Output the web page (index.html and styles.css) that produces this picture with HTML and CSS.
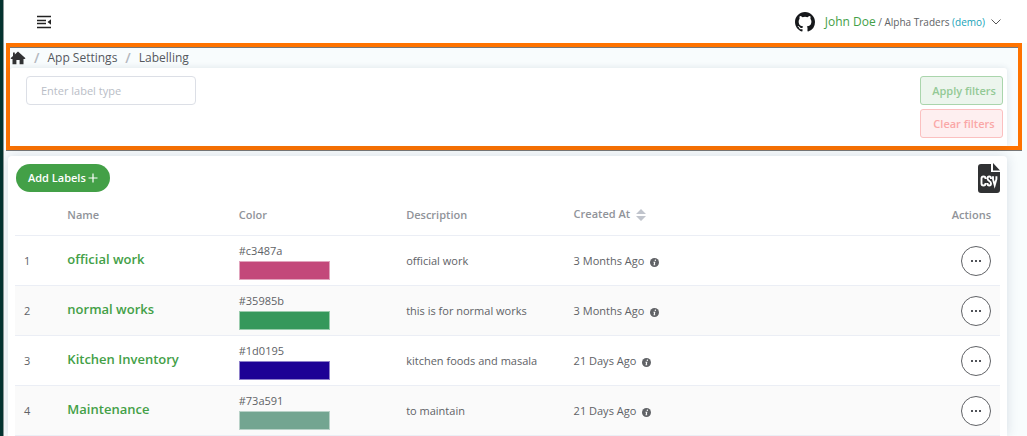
FILE: index.html
```html
<!DOCTYPE html>
<html lang="en">
<head>
<meta charset="utf-8">
<title>Labelling</title>
<link rel="stylesheet" href="styles.css">
</head>
<body>
<svg class="defs" aria-hidden="true">
  <symbol id="info" viewBox="0 0 16 16"><circle cx="8" cy="8" r="8" fill="currentColor"/><path d="M9.6 2.8a1.3 1.3 0 1 1-.1 2.6 1.3 1.3 0 0 1 .1-2.6zM6 6.6h3.6L8.5 11.400h1l-.3 1.400H6.200L7.300 8H5.700z" fill="#fff"/></symbol>
  <symbol id="dots" viewBox="0 0 12 4"><path d="M1 1h2v2H1zM5 1h2v2H5zM9 1h2v2H9z" fill="currentColor"/></symbol>
</svg>
<div class="app">
  <div class="sidebar"></div>
  <div class="page">
    <header class="topbar">
      <button class="icon-btn" aria-label="Toggle menu">
        <svg width="16" height="14" viewBox="0 0 16 14"><path d="M1 1.500h14M1 5.500h9M1 8.500h9M1 12.500h14" stroke="#222" stroke-width="1.400" fill="none"/><path d="M15 4.200v5.600L11.500 7z" fill="#222"/></svg>
      </button>
      <div class="account">
        <a href="#" class="github" aria-label="GitHub"><svg width="20" height="20" viewBox="0 0 16 16"><path fill="#16181b" fill-rule="evenodd" d="M8 0C3.580 0 0 3.580 0 8c0 3.540 2.290 6.530 5.470 7.590.4.070.55-.17.55-.38 0-.19-.01-.82-.01-1.490-2.010.37-2.530-.49-2.690-.94-.09-.23-.48-.94-.82-1.130-.28-.15-.68-.52-.01-.53.63-.01 1.080.58 1.230.82.72 1.210 1.870.87 2.330.66.070-.52.28-.87.51-1.070-1.780-.2-3.640-.89-3.640-3.950 0-.87.31-1.590.82-2.150-.08-.2-.36-1.020.08-2.120 0 0 .67-.21 2.200.82a7.600 7.600 0 0 1 4 0c1.530-1.040 2.200-.82 2.200-.82.44 1.100.16 1.920.08 2.120.51.56.82 1.270.82 2.150 0 3.070-1.870 3.750-3.650 3.950.29.25.54.73.54 1.480 0 1.070-.01 1.930-.01 2.200 0 .21.15.46.55.38A8.010 8.010 0 0 0 16 8c0-4.420-3.580-8-8-8z"/></svg></a>
        <div class="who"><span class="user">John Doe</span> / Alpha Traders <span class="demo">(demo)</span></div>
        <svg class="chevron" width="10" height="6" viewBox="0 0 10 6"><path d="M.5.5 5 5 9.500.5" fill="none" stroke="#555" stroke-width="1"/></svg>
      </div>
    </header>
    <main>
      <section class="highlight">
        <nav class="crumbs" aria-label="Breadcrumb">
          <a href="#" aria-label="Home"><svg width="16" height="14" viewBox="0 0 16 14"><path d="M8 .5 15.500 7.300 14.600 8H13.500v5.300H9.600V9H6.400v4.300H2.500V8H1.400L.5 7.300 3 5V1.500h1.800v1.900z" fill="#303133"/></svg></a>
          <span class="slash">/</span><a href="#">App Settings</a><span class="slash">/</span><span>Labelling</span>
        </nav>
        <form class="filters">
          <input class="label-type" type="text" placeholder="Enter label type" aria-label="Label type">
          <div class="filter-actions">
            <button type="button" class="btn apply">Apply filters</button>
            <button type="button" class="btn clear">Clear filters</button>
          </div>
        </form>
      </section>
      <section class="card">
        <div class="tools">
          <button class="add">Add Labels <svg width="10" height="10" viewBox="0 0 10 10"><path d="M5 .5v9M.5 5h9" stroke="#fff" stroke-width="1.200"/></svg></button>
          <button class="icon-btn" aria-label="Export CSV">
            <svg width="22" height="30" viewBox="0 0 22 30"><path d="M3 1h10v8h9v18a3 3 0 0 1-3 3H3a3 3 0 0 1-3-3V4a3 3 0 0 1 3-3zM15 0l7 7.500h-7z" fill="#303133"/><path d="M7.500 16v-.5a2 2 0 0 0-4 0v5a2 2 0 0 0 4 0V20M13 16v-.5c0-2.600-3.500-2.600-3.500 0 0 2.800 3.500 2.200 3.500 5 0 2.600-3.500 2.600-3.500 0V20M15 13.200v3l1.700 6 1.700-6v-3" fill="none" stroke="#fff" stroke-width="1.900"/></svg>
          </button>
        </div>
        <table class="labels">
          <colgroup><col class="c-num"><col class="c-name"><col class="c-col"><col class="c-col"><col class="c-date"><col></colgroup>
          <thead><tr><th></th><th>Name</th><th>Color</th><th>Description</th><th class="sortable">Created At <svg class="sort" width="10" height="12" viewBox="0 0 10 12"><path d="M5 0l5 5H0zM5 12l5-5H0z" fill="#c0c4cc"/></svg></th><th class="act">Actions</th></tr></thead>
          <tbody>
            <tr><td class="num">1</td><td class="name"><a href="#">official work</a></td><td>#c3487a<div class="swatch" style="background-color:#c3487a"></div></td><td>official work</td><td>3 Months Ago <svg class="info" width="9" height="9"><use href="#info"/></svg></td><td class="act"><button class="more" aria-label="More actions"><svg width="12" height="4"><use href="#dots"/></svg></button></td></tr>
            <tr><td class="num">2</td><td class="name"><a href="#">normal works</a></td><td>#35985b<div class="swatch" style="background-color:#35985b"></div></td><td>this is for normal works</td><td>3 Months Ago <svg class="info" width="9" height="9"><use href="#info"/></svg></td><td class="act"><button class="more" aria-label="More actions"><svg width="12" height="4"><use href="#dots"/></svg></button></td></tr>
            <tr><td class="num">3</td><td class="name"><a href="#">Kitchen Inventory</a></td><td>#1d0195<div class="swatch" style="background-color:#1d0195"></div></td><td>kitchen foods and masala</td><td>21 Days Ago <svg class="info" width="9" height="9"><use href="#info"/></svg></td><td class="act"><button class="more" aria-label="More actions"><svg width="12" height="4"><use href="#dots"/></svg></button></td></tr>
            <tr><td class="num">4</td><td class="name"><a href="#">Maintenance</a></td><td>#73a591<div class="swatch" style="background-color:#73a591"></div></td><td>to maintain</td><td>21 Days Ago <svg class="info" width="9" height="9"><use href="#info"/></svg></td><td class="act"><button class="more" aria-label="More actions"><svg width="12" height="4"><use href="#dots"/></svg></button></td></tr>
          </tbody>
        </table>
      </section>
    </main>
  </div>
</div>
</body>
</html>
```
FILE: styles.css
```css
* { box-sizing: border-box; }
body { margin: 0; overflow: hidden; color: #606266; font: 11px/16px "Open Sans", "Noto Sans", sans-serif; }
a { color: inherit; text-decoration: none; }
button, input { font: inherit; }
svg { display: block; }
.defs { display: none; }

.app { display: flex; min-height: 100vh; }
.sidebar { flex: none; width: 4px; background: #04332f; border-right: 1px solid #8b9896; }
.page { flex: 1; min-width: 0; background: #f8fcfd; }

.topbar { display: flex; align-items: center; justify-content: space-between; height: 43px; padding: 0 26px 0 32px; background: #fff; }
.icon-btn { padding: 0; border: 0; background: none; cursor: pointer; }
.account { display: flex; align-items: center; gap: 10px; }
.who { font-size: 10px; line-height: 18px; }
.user { color: #43a047; font-size: 12px; }
.demo { color: #17a2b8; }
.chevron { margin-left: -4px; }

.highlight { margin: 0 5px 0 2px; border: 4px solid #ff7300; box-shadow: 0 1px 0 #777; }
.crumbs { display: flex; align-items: center; height: 21px; box-shadow: inset 0 1px 0 #777; color: #55585e; font-size: 12px; }
.slash { margin: 0 8px; color: #b4b8bf; font-size: 14px; font-weight: 600; }
.filters { display: flex; justify-content: space-between; align-items: flex-start; min-height: 78px; margin-right: 11px; padding: 8px 4px 4px 16px; background: #fff; border-radius: 3px 3px 0 0; box-shadow: 0 0 6px rgba(30, 60, 90, .12); }
.label-type { width: 170px; height: 29px; padding: 0 14px; border: 1px solid #dcdfe6; border-radius: 4px; outline: 0; color: #606266; }
.label-type::placeholder { color: #b9bdc6; opacity: 1; }
.filter-actions { display: flex; flex-direction: column; gap: 4px; }
.btn { width: 83px; height: 29px; padding: 0 0 0 5px; border: 1px solid; border-radius: 3px; font-weight: 600; }
.apply { color: #93c995; background: #ecf5ed; border-color: #aad5ac; }
.clear { color: #faa7a7; background: #feeff0; border-color: #fbc0c0; }

.card { margin: 6px 20px 0 4px; padding: 8px 7px 0; background: #fff; border-radius: 4px 4px 0 0; box-shadow: 0 0 12px rgba(30, 50, 90, .15); }
.tools { display: flex; align-items: center; justify-content: space-between; height: 28px; padding: 0 0 0 1px; }
.add { display: flex; align-items: center; gap: 2px; height: 28px; padding: 0 12px; border: 0; border-radius: 14px; background: #43a047; color: #fff; font-weight: 600; white-space: nowrap; }

.labels { width: 100%; table-layout: fixed; border-collapse: separate; border-spacing: 0; }
.c-num { width: 4.3%; }
.c-name { width: 17.4%; }
.c-col { width: 17%; }
.c-date { width: 27.3%; }
th { height: 44px; padding: 3px 9px 0 10px; border-bottom: 1px solid #ebeef5; color: #909399; font-weight: 600; text-align: left; }
.sortable { padding-top: 0; }
td { height: 50px; padding: 1px 9px 0 10px; border-bottom: 1px solid #ebeef5; }
tbody tr:nth-child(even) { background: #fafafa; }
.num { padding-left: 9px; }
.name { padding-bottom: 4px; color: #43a047; font-size: 13px; font-weight: 600; }
.swatch { width: 91px; height: 19px; margin-top: 2px; border: 1px solid rgba(255, 255, 255, .5); }
.sort, .info { display: inline-block; vertical-align: middle; margin-left: 3px; }
.labels .act { text-align: right; }
.more { display: inline-flex; align-items: center; justify-content: center; width: 30px; height: 30px; padding: 0; border: 1px solid #606266; border-radius: 50%; background: #fff; color: #505258; vertical-align: middle; }
```
